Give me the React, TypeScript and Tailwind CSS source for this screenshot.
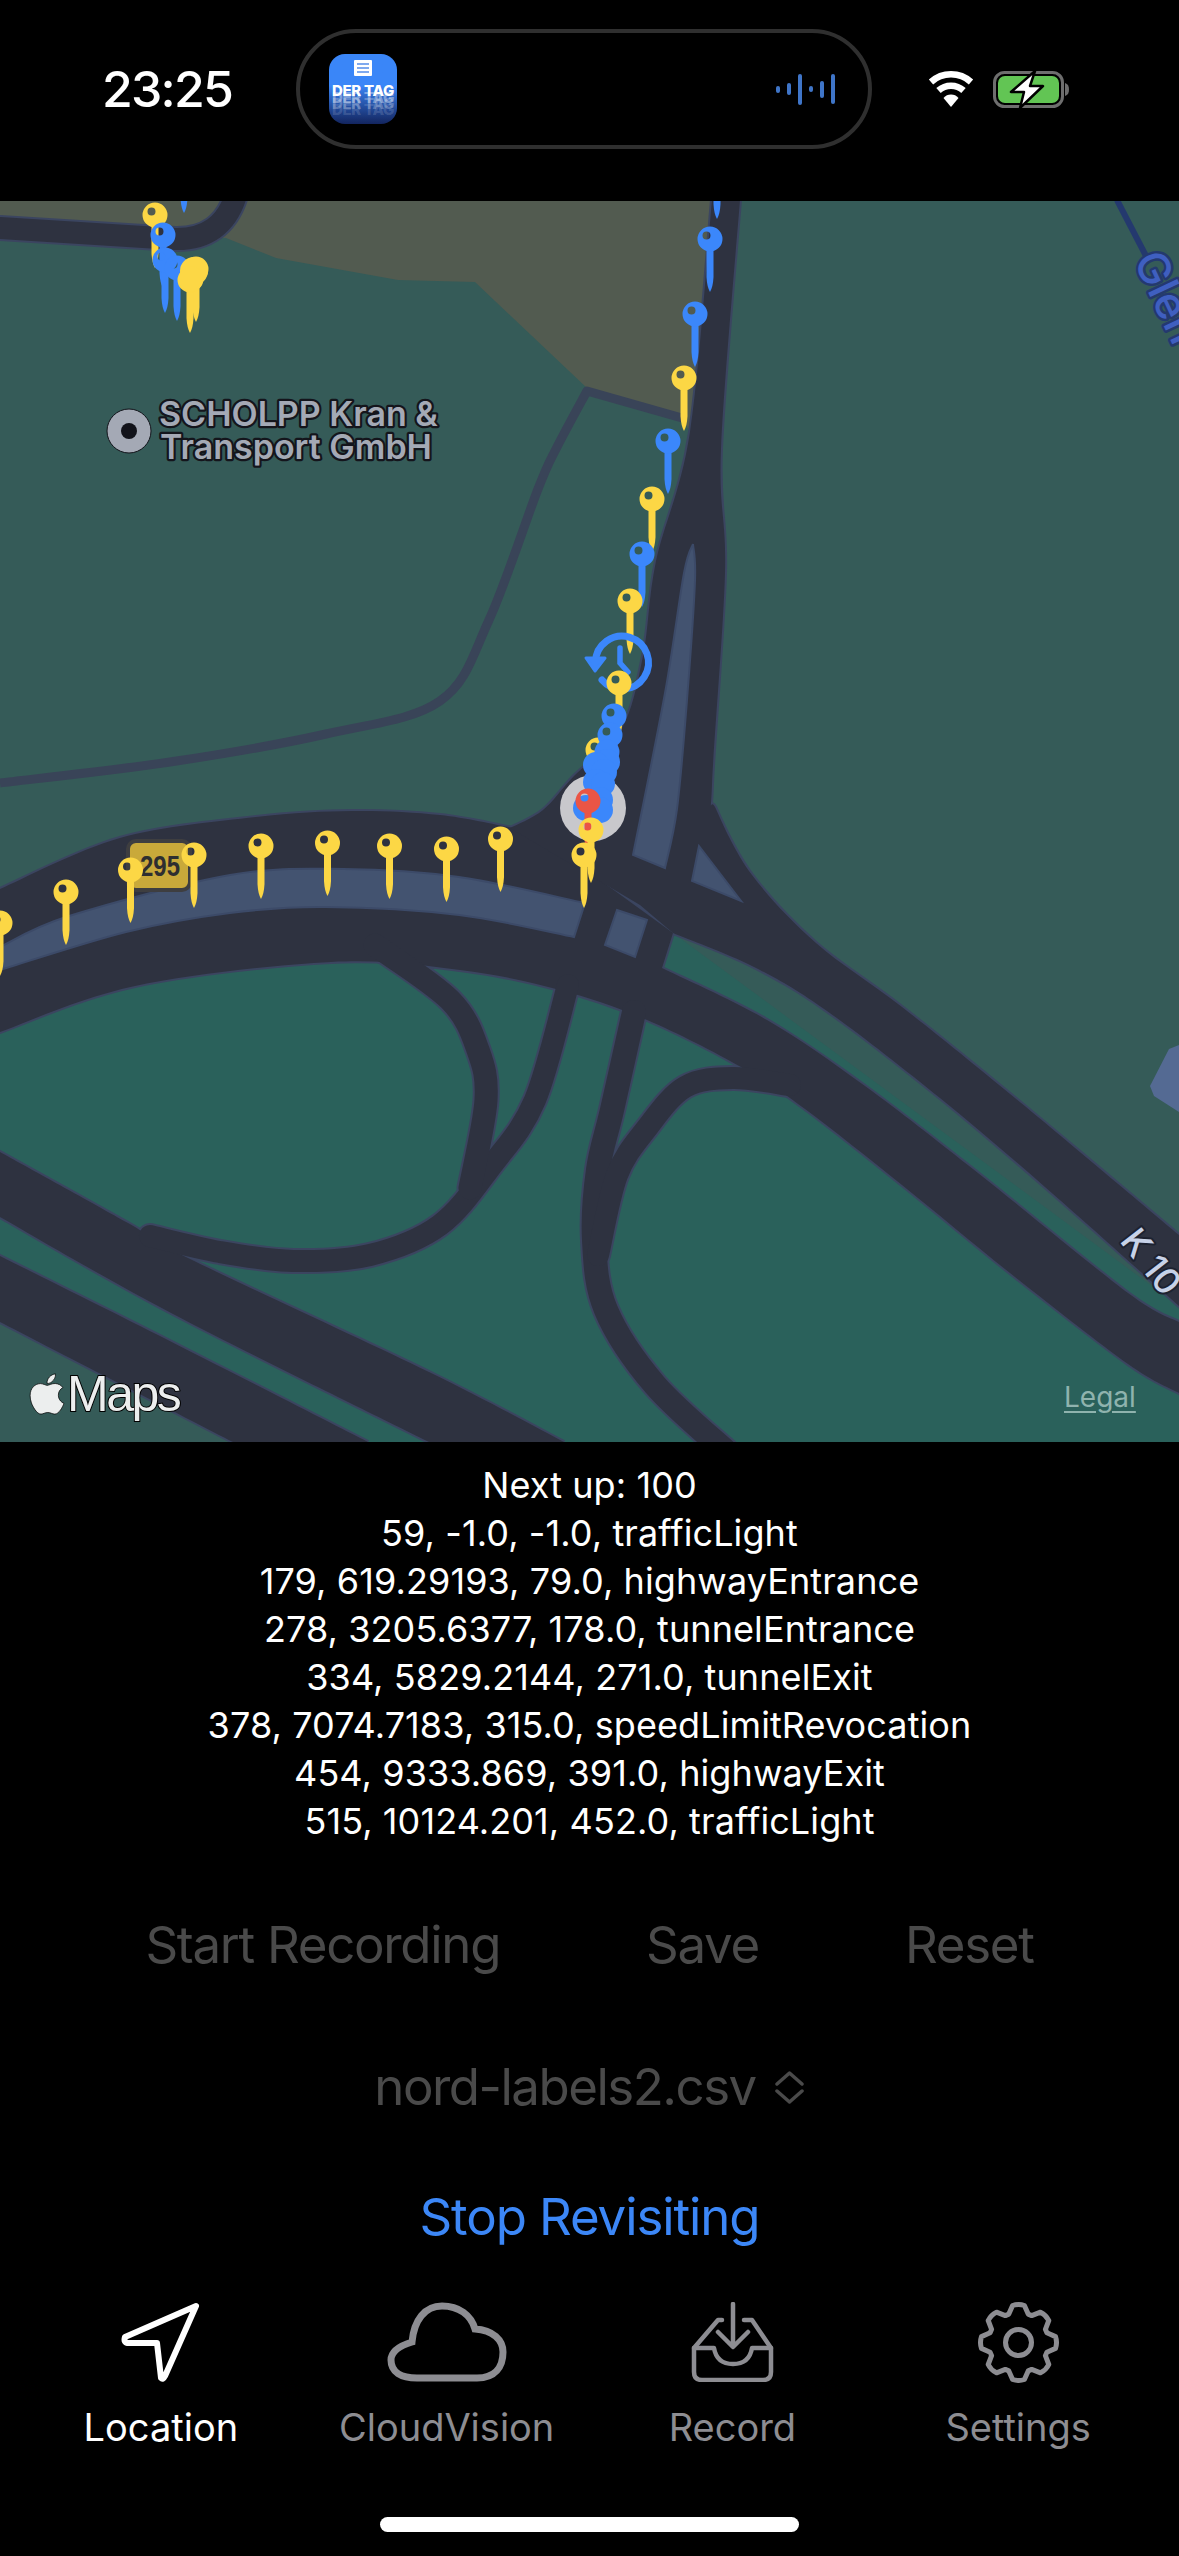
import { FaApple } from "react-icons/fa";

// smooth curve through points, as a path fragment
function curve(pts: number[][], start = "M") {
  let d = `${start}${pts[0][0]} ${pts[0][1]}`;
  for (let i = 0; i < pts.length - 1; i++) {
    const p0 = pts[i - 1] || pts[i];
    const p1 = pts[i];
    const p2 = pts[i + 1];
    const p3 = pts[i + 2] || p2;
    const c1x = p1[0] + (p2[0] - p0[0]) / 6;
    const c1y = p1[1] + (p2[1] - p0[1]) / 6;
    const c2x = p2[0] - (p3[0] - p1[0]) / 6;
    const c2y = p2[1] - (p3[1] - p1[1]) / 6;
    d += ` C${c1x.toFixed(1)} ${c1y.toFixed(1)} ${c2x.toFixed(1)} ${c2y.toFixed(1)} ${p2[0]} ${p2[1]}`;
  }
  return d;
}

const YELLOW = "#fcd745";
const BLUE = "#3b87fb";
const RED = "#ea5545";
const ROAD = "#2e3240";
const EDGE = "#3b4560";
const BAND = "#435370";

const roadAreas = [
  // main highway into the lower K 10 carriageway
  curve([[0, 889], [120, 838], [256, 817], [353, 811], [440, 815], [513, 828]]) +
    " L600 880 L673 933 L662 968 " +
    curve([[662, 968], [767, 1020], [865, 1086], [978, 1173], [1128, 1293], [1179, 1322]], "L") +
    " L1179 1393 " +
    curve([[1179, 1393], [1128, 1364], [1015, 1277], [902, 1185], [805, 1109], [741, 1067], [647, 1020], [560, 990], [460, 970], [331, 962], [135, 986], [0, 1032]], "L") +
    " Z",
  // north-south road into the upper K 10 carriageway
  curve([[712, 200], [690, 432], [656, 561], [643, 656], [621, 730], [574, 776], [543, 810], [510, 828]]) +
    " L640 905 L673 933 " +
    curve([[673, 933], [752, 966], [827, 1011], [940, 1098], [1053, 1194], [1179, 1306]], "L") +
    " L1179 1235 " +
    curve([[1179, 1235], [1015, 1098], [902, 1007], [816, 943], [752, 875], [716, 809], [712, 784], [725, 573], [721, 449], [740, 200]], "L") +
    " Z",
  // lower left highways
  curve([[0, 1152], [128, 1223], [188, 1258], [429, 1372], [564, 1442]]) + " L429 1442 " + curve([[429, 1442], [173, 1314], [0, 1217]], "L") + " Z",
  curve([[0, 1256], [158, 1335], [368, 1442]]) + " L233 1442 " + curve([[233, 1442], [0, 1322]], "L") + " Z",
];

const roadLines = [
  { d: "M0 228 L175 239 Q222 240 236 195", w: 22 },
  { d: curve([[568, 985], [535, 1100], [492, 1165], [440, 1225], [370, 1255], [293, 1261], [220, 1252], [150, 1236]]), w: 22 },
  { d: curve([[375, 945], [450, 1000], [478, 1050], [486, 1100], [470, 1188]]), w: 23 },
  { d: curve([[634, 1012], [612, 1110], [598, 1170], [594, 1240], [606, 1310], [655, 1385], [730, 1455]]), w: 24 },
  { d: curve([[790, 1085], [733, 1078], [685, 1087], [647, 1128], [617, 1175], [598, 1255]]), w: 22 },
];

const bands = [
  curve([[0, 947], [69, 916], [230, 875], [344, 869], [459, 877], [585, 903]]) + " L574 937 " + curve([[574, 937], [459, 915], [325, 907], [230, 913], [126, 932], [0, 970]], "L") + " Z",
  curve([[693, 544], [684, 573], [665, 693], [633, 855]]) + " L665 868 " + curve([[665, 868], [677, 809], [687, 700], [695, 581], [693, 544]], "L") + " Z",
  "M699 846 L692 881 L741 901 Z",
  "M617 910 L647 920 L635 957 L605 945 Z",
];

function Pin({ x, y, color }: { x: number; y: number; color: string }) {
  return (
    <g transform={`translate(${x} ${y})`} fill={color}>
      <path d="M-3.5 11 L-3.5 38 Q-3 48 0 53 Q3 48 3.5 38 L3.5 11 Z" />
      <path
        fillRule="evenodd"
        d="M-12.5 0 A12.5 12.5 0 1 0 12.5 0 A12.5 12.5 0 1 0 -12.5 0 Z M-7.5 -3.5 A4 4 0 1 0 0.5 -3.5 A4 4 0 1 0 -7.5 -3.5 Z"
      />
    </g>
  );
}

function MapView() {
  return (
    <svg viewBox="0 201 1179 1241" className="block w-full h-full">
      <rect x="0" y="201" width="1179" height="1241" fill="#355b58" />
      <path d="M0 201 H712 L690 432 L682 418 L587 388 L475 282 L398 280 L276 258 L226 238 L0 225 Z" fill="#525b50" />
      <path
        d="M0 1000 L331 950 L560 980 L647 1000 L673 933 L1179 1306 V1442 H233 L0 1322 Z"
        fill="#2a615b"
      />
      <path d="M1169 1049 L1150 1086 L1154 1096 L1179 1112 V1045 Z" fill="#546a93" />

      {/* small roads */}
      <path d={curve([[0, 783], [170, 762], [326, 734], [440, 701], [489, 620], [538, 489], [556, 449], [587, 391]]) + " L682 418"} fill="none" stroke="#394458" strokeWidth="9" strokeLinejoin="round" />
      <path d="M1117 200 L1146 256" fill="none" stroke="#24396e" strokeWidth="6" />

      {/* road outlines go first so the carriageways merge */}
      {roadAreas.map((d, i) => (
        <path key={i} d={d} fill={EDGE} stroke={EDGE} strokeWidth="4" />
      ))}
      {roadLines.map((l, i) => (
        <path key={i} d={l.d} fill="none" stroke={EDGE} strokeWidth={l.w + 4} strokeLinecap="round" />
      ))}
      {roadAreas.map((d, i) => (
        <path key={i} d={d} fill={ROAD} />
      ))}
      {roadLines.map((l, i) => (
        <path key={i} d={l.d} fill="none" stroke={ROAD} strokeWidth={l.w} strokeLinecap="round" />
      ))}
      {bands.map((d, i) => (
        <path key={i} d={d} fill={BAND} stroke="#3c4a68" strokeWidth="2" />
      ))}

      {/* labels */}
      <circle cx="129" cy="431" r="22" fill="#a4a9b5" stroke="#12131a" strokeWidth="1" />
      <circle cx="129" cy="431" r="8" fill="#12131a" />
      <text className="font-['Inter',sans-serif] font-semibold text-[34px] [paint-order:stroke]" fill="#a4a9b5" stroke="#14151c" strokeWidth="4.5" strokeLinejoin="round">
        <tspan x="159" y="426">SCHOLPP Kran &amp;</tspan>
        <tspan x="160" y="459">Transport GmbH</tspan>
      </text>
      <text
        transform="translate(1133 260) rotate(65)"
        className="font-['Inter',sans-serif] font-medium text-[44px] [paint-order:stroke]"
        fill="#3f5fc0"
        stroke="#24396e"
        strokeWidth="5"
        strokeLinejoin="round"
      >
        Glen
      </text>
      <text
        transform="translate(1119 1241) rotate(52)"
        className="font-['Inter',sans-serif] font-medium text-[36px] [paint-order:stroke]"
        fill="#c7d2e8"
        stroke="#1d2230"
        strokeWidth="4"
        strokeLinejoin="round"
      >
        K 10
      </text>

      {/* highway shield */}
      <rect x="128" y="841" width="62" height="49" rx="8" fill="#c9a93a" stroke="#3e3e40" strokeWidth="4" />
      <text x="140" y="876" textLength="40" lengthAdjust="spacingAndGlyphs" fill="#2e2e30" className="font-['Liberation_Sans',sans-serif] font-bold text-[30px]">
        295
      </text>

      {/* top left cluster */}
      <Pin x={155} y={215} color={YELLOW} />
      <Pin x={163} y={235} color={BLUE} />
      <Pin x={165} y={260} color={BLUE} />
      <Pin x={177} y={268} color={BLUE} />
      <Pin x={184} y={160} color={BLUE} />
      <Pin x={196} y={269} color={YELLOW} />
      <Pin x={190} y={280} color={YELLOW} />
      <circle cx="194" cy="271" r="14" fill={YELLOW} />
      <circle cx="191" cy="279" r="12.5" fill={YELLOW} />

      {/* north-south run */}
      <Pin x={717} y={166} color={BLUE} />
      <Pin x={710} y={239} color={BLUE} />
      <Pin x={695} y={314} color={BLUE} />
      <Pin x={684} y={378} color={YELLOW} />
      <Pin x={668} y={441} color={BLUE} />
      <Pin x={652} y={499} color={YELLOW} />
      <Pin x={642} y={554} color={BLUE} />
      <Pin x={630} y={601} color={YELLOW} />

      {/* revisit marker */}
      <g fill="none" stroke={BLUE} strokeWidth="7" strokeLinecap="round">
        <path d="M595.5 662 A26.5 26.5 0 1 1 602 680" />
        <path d="M620 648 V663 L628 672" strokeWidth="5.5" />
        <path d="M586 658 H605 L595 671 Z" fill={BLUE} strokeWidth="3" strokeLinejoin="round" />
      </g>

      {/* current position */}
      <circle cx="593" cy="808" r="33" fill="#c8c8cc" />
      <Pin x={619} y={683} color={YELLOW} />
      <Pin x={598} y={750} color={YELLOW} />
      <Pin x={614} y={716} color={BLUE} />
      <Pin x={610} y={735} color={BLUE} />
      <circle cx="607" cy="752" r="12.5" fill={BLUE} />
      <circle cx="607" cy="762" r="13" fill={BLUE} />
      <circle cx="596" cy="765" r="13" fill={BLUE} />
      <circle cx="604" cy="772" r="13" fill={BLUE} />
      <circle cx="596" cy="782" r="13" fill={BLUE} />
      <circle cx="603" cy="784" r="12" fill={BLUE} />
      <circle cx="586" cy="808" r="13" fill={BLUE} />
      <circle cx="600" cy="800" r="13" fill={BLUE} />
      <circle cx="600" cy="810" r="13" fill={BLUE} />
      <Pin x={588} y={801} color={RED} />
      <Pin x={591} y={830} color={YELLOW} />
      <Pin x={584} y={855} color={YELLOW} />

      {/* highway run */}
      <Pin x={0} y={923} color={YELLOW} />
      <Pin x={66} y={892} color={YELLOW} />
      <Pin x={130.5} y={870} color={YELLOW} />
      <Pin x={194} y={855} color={YELLOW} />
      <Pin x={261} y={846} color={YELLOW} />
      <Pin x={327.5} y={843} color={YELLOW} />
      <Pin x={389.5} y={846} color={YELLOW} />
      <Pin x={446.5} y={849} color={YELLOW} />
      <Pin x={500.5} y={839} color={YELLOW} />
    </svg>
  );
}

function StatusBar() {
  return (
    <div className="h-[201px] pt-[29px] pl-[102px] flex items-start shrink-0">
      <div className="flex items-center h-[120px]">
        <div className="w-[194px] text-white text-[50px] font-medium leading-none tracking-[-1.8px]">23:25</div>
        <div className="w-[576px] h-[120px] rounded-[60px] border-[4px] border-[#2f2f2f] flex items-center justify-between pl-[29px] pr-[33px]">
          <div className="relative w-[68px] h-[70px] rounded-[16px] overflow-hidden bg-gradient-to-b from-[#3a86f8] from-45% to-[#13255f] flex flex-col items-center">
            <div className="mt-[6px] w-[18px] h-[16px] bg-white rounded-[1px] flex flex-col gap-[2px] pt-[3px] px-[3px]">
              <div className="h-[2px] bg-[#7fa9ee]" />
              <div className="h-[2px] bg-[#7fa9ee]" />
              <div className="h-[2px] bg-[#7fa9ee]" />
            </div>
            <span className="absolute top-[47px] text-[15px] leading-[18px] font-extrabold tracking-[-0.3px] text-white/15 whitespace-nowrap">DER TAG</span>
            <span className="absolute top-[41px] text-[15px] leading-[18px] font-extrabold tracking-[-0.3px] text-white/25 whitespace-nowrap">DER TAG</span>
            <span className="absolute top-[35px] text-[15px] leading-[18px] font-extrabold tracking-[-0.3px] text-white/40 whitespace-nowrap">DER TAG</span>
            <span className="absolute top-[28px] text-[15px] leading-[18px] font-extrabold tracking-[-0.3px] text-white whitespace-nowrap">DER TAG</span>
          </div>
          <div className="flex items-center gap-[6.5px]">
            {[7, 12, 31, 6, 17, 30].map((h, i) => (
              <div key={i} className="w-[4.5px] rounded-full bg-[#3f75c8]" style={{ height: h }} />
            ))}
          </div>
        </div>
        <svg width="48" height="36" viewBox="0 0 48 36" className="ml-[55px]">
          <g fill="none" stroke="#fff" strokeWidth="6.5">
            <path d="M4 11 A30 30 0 0 1 44 11" />
            <path d="M11.5 19.5 A18.5 18.5 0 0 1 36.5 19.5" />
          </g>
          <path d="M24 36 L16.5 27 A10 10 0 0 1 31.5 27 Z" fill="#fff" />
        </svg>
        <svg width="76" height="37" viewBox="0 0 76 37" className="ml-[18px]">
          <rect x="1.5" y="1.5" width="68" height="34" rx="10" fill="none" stroke="#6e6e6e" strokeWidth="3" />
          <rect x="5" y="5" width="61" height="27" rx="7" fill="#62c554" />
          <path d="M72 12 C75 13 76 15 76 18.5 C76 22 75 24 72 25 Z" fill="#6e6e6e" />
          <path d="M42 0 L18 21 H31 L27 37 L50 15 H37 Z" fill="#fff" stroke="#000" strokeWidth="2.5" strokeLinejoin="round" />
        </svg>
      </div>
    </div>
  );
}

const gearPath = (() => {
  const teeth = 8;
  const pts: string[] = [];
  for (let i = 0; i < teeth; i++) {
    const a = (i / teeth) * Math.PI * 2 - Math.PI / 2;
    const step = (Math.PI * 2) / teeth;
    const at = (r: number, o: number) => `${(40.5 + r * Math.cos(a + o)).toFixed(1)} ${(40.5 + r * Math.sin(a + o)).toFixed(1)}`;
    pts.push(`L${at(30, -step * 0.42)}`, `L${at(37.5, -step * 0.2)}`, `Q${at(39, 0)} ${at(37.5, step * 0.2)}`, `L${at(30, step * 0.42)}`);
  }
  return "M" + pts.join(" ").slice(1) + " Z";
})();

function Tab({ label, active, children }: { label: string; active?: boolean; children: React.ReactNode }) {
  return (
    <div className={`flex flex-col items-center ${active ? "text-white" : "text-[#8d8d92]"}`}>
      <div className="h-[82px] flex items-center justify-center">{children}</div>
      <div className="mt-[22px] text-[38px] leading-[44px] whitespace-nowrap">{label}</div>
    </div>
  );
}

const infoLines = [
  "Next up: 100",
  "59, -1.0, -1.0, trafficLight",
  "179, 619.29193, 79.0, highwayEntrance",
  "278, 3205.6377, 178.0, tunnelEntrance",
  "334, 5829.2144, 271.0, tunnelExit",
  "378, 7074.7183, 315.0, speedLimitRevocation",
  "454, 9333.869, 391.0, highwayExit",
  "515, 10124.201, 452.0, trafficLight",
];

export default function App() {
  return (
    <div className="w-[1179px] h-[2556px] bg-black flex flex-col overflow-hidden font-['Inter',sans-serif]">
      <StatusBar />

      <div className="relative h-[1241px] shrink-0 overflow-hidden">
        <MapView />
        <div className="absolute left-[29px] top-[1168px] flex items-center text-[#eceeee]">
          <FaApple className="w-[36px] h-[46px] stroke-black stroke-[8px]" />
          <span className="ml-[2px] text-[50px] leading-[50px] tracking-[-2.5px] font-['Liberation_Sans',sans-serif] [-webkit-text-stroke:2px_#000] [paint-order:stroke_fill]">Maps</span>
        </div>
        <div className="absolute left-[1064px] top-[1181px] text-[28px] leading-[30px] text-[#8fb3ae] underline underline-offset-4">Legal</div>
      </div>

      <div className="pt-[19px] text-center text-white text-[36px] leading-[48px] tracking-[0.1px]">
        {infoLines.map((line) => (
          <div key={line}>{line}</div>
        ))}
      </div>

      <div className="mt-[69px] flex justify-center gap-[146px] text-[51px] leading-[62px] tracking-[-1.3px] text-[#4a4a4a]">
        <span>Start Recording</span>
        <span>Save</span>
        <span>Reset</span>
      </div>

      <div className="mt-[80px] flex justify-center items-center gap-[18px] text-[51px] leading-[62px] tracking-[-1.5px] text-[#4a4a4a]">
        <span>nord-labels2.csv</span>
        <svg width="31" height="33" viewBox="0 0 31 33" fill="none" stroke="#4a4a4a" strokeWidth="3.5" strokeLinecap="round" strokeLinejoin="round">
          <path d="M3 13 L15.5 2 L28 13" />
          <path d="M3 20 L15.5 31 L28 20" />
        </svg>
      </div>

      <div className="mt-[68px] text-center text-[51px] leading-[62px] tracking-[-1.1px] text-[#3c87f7]">Stop Revisiting</div>

      <div className="mt-[53px] px-[18px] grid grid-cols-4">
        <Tab label="Location" active>
          <svg width="80" height="80" viewBox="0 0 80 80" fill="none" stroke="currentColor" strokeWidth="6" strokeLinejoin="round">
            <path d="M75 4 L4 35 Q2 41 8 41 L36 41 L40 76 Q42 78 44 74 Z" />
          </svg>
        </Tab>
        <Tab label="CloudVision">
          <svg width="120" height="80" viewBox="0 0 120 80" fill="none" stroke="currentColor" strokeWidth="7">
            <path d="M30 76 H90 C108 76 116 65 116 50 C116 38 106 28 88 27 C84 13 72 4 55 4 C38 4 27 18 25 40 C12 44 4 50 4 58 C4 70 14 76 30 76 Z" />
          </svg>
        </Tab>
        <Tab label="Record">
          <svg width="85" height="80" viewBox="0 0 85 80" fill="none" stroke="currentColor" strokeWidth="4.5" strokeLinejoin="round" strokeLinecap="round">
            <path d="M32 18 H28 L4 46 V70 Q4 78 12 78 H73 Q81 78 81 70 V46 L62 18 H54" />
            <path d="M4 46 H24 C26 58 34 62 43 62 C52 62 60 58 62 46 H81" />
            <path d="M43 2 V44 M28 30 L43 45 L58 30" />
          </svg>
        </Tab>
        <Tab label="Settings">
          <svg width="81" height="81" viewBox="0 0 81 81" fill="none" stroke="currentColor" strokeWidth="5" strokeLinejoin="round">
            <path d={gearPath} />
            <circle cx="40.5" cy="40.5" r="13" />
          </svg>
        </Tab>
      </div>

      <div className="mt-auto mb-[24px] mx-auto w-[419px] h-[15px] rounded-full bg-white" />
    </div>
  );
}
